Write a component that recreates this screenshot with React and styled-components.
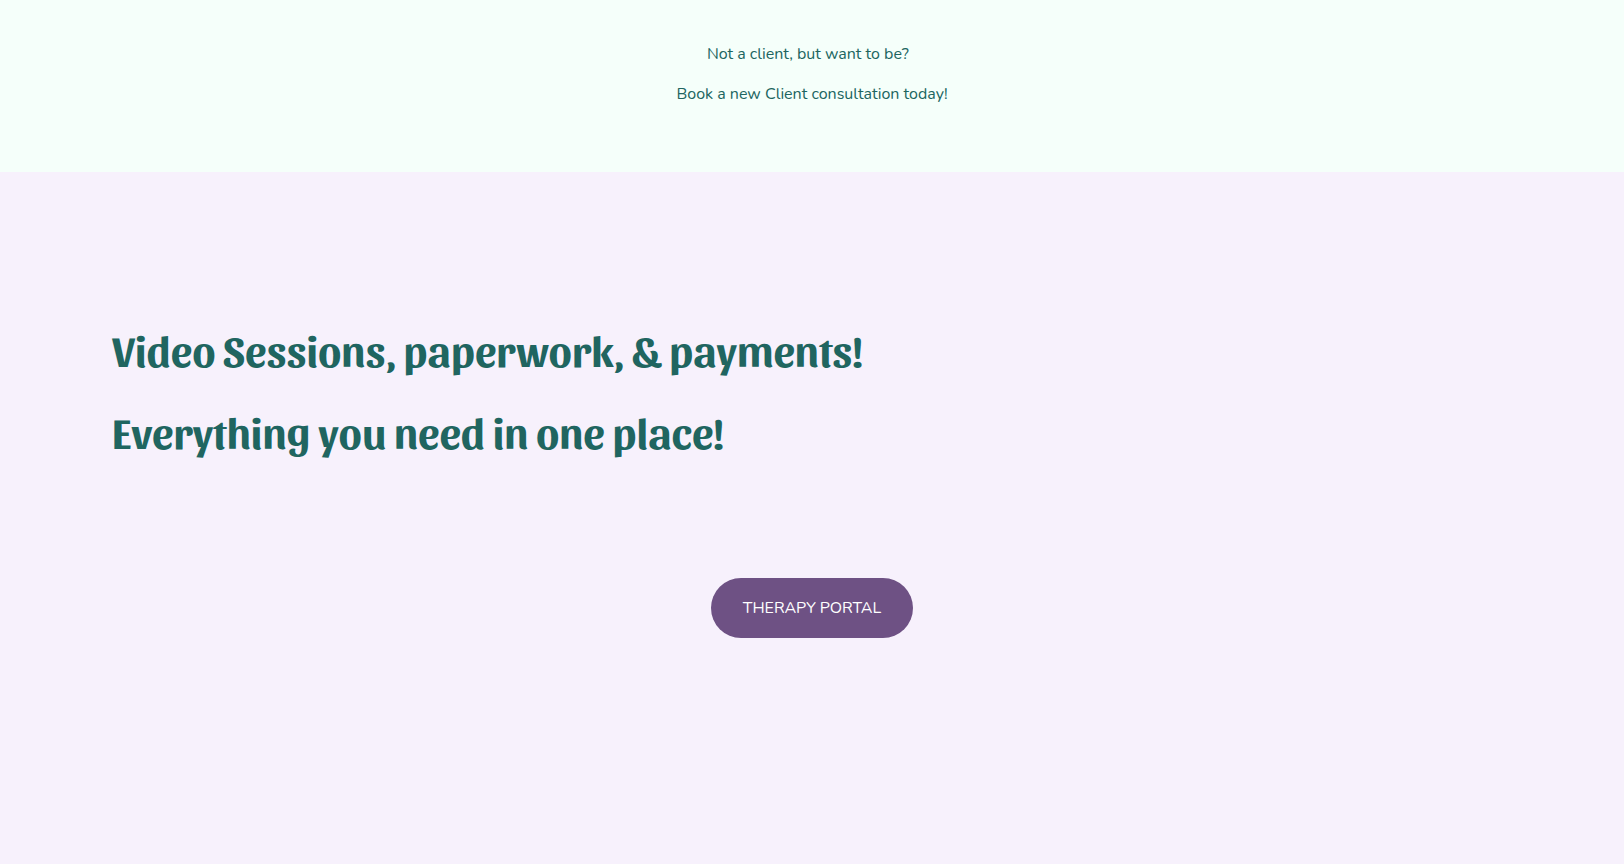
import React from "react";
import styled, { createGlobalStyle } from "styled-components";

const App = () => {
  return (
    <>
      <GlobalStyle />
      <main>
        <Consultation>
          <Text>Not a client, but want to be?&nbsp;&nbsp;</Text>
          <Text>Book a new Client consultation today!</Text>
        </Consultation>
        <Portal>
          <Headings>
            <Title>Video Sessions, paperwork, &amp; payments!</Title>
            <Title>Everything you need in one place!</Title>
          </Headings>
          <Button href="#portal">THERAPY PORTAL</Button>
        </Portal>
      </main>
    </>
  );
};

const GlobalStyle = createGlobalStyle`
  * {
    box-sizing: border-box;
  }

  body {
    margin: 0;
    background-color: #f7f1fc;
    color: #206560;
    font-family: Nunito, Lato, sans-serif;
    font-size: 16px;
    line-height: 24px;
  }
`;

const Consultation = styled.section`
  display: flex;
  flex-direction: column;
  align-items: center;
  gap: 16px;
  padding: 42px 24px 66px;
  background-color: #f5fffa;
`;

const Text = styled.p`
  margin: 0;
  text-align: center;
`;

const Portal = styled.section`
  display: flex;
  flex-direction: column;
  align-items: center;
  gap: 118px;
  padding: 148px 112px;
`;

const Headings = styled.div`
  display: flex;
  flex-direction: column;
  align-self: stretch;
  gap: 24px;
`;

const Title = styled.h2`
  margin: 0;
  font-family: Sansita, Lato, sans-serif;
  font-size: 43px;
  font-weight: 700;
  line-height: 58px;
`;

const Button = styled.a`
  padding: 18px 32px;
  border-radius: 30px;
  background-color: #6e5184;
  color: #fff;
  text-decoration: none;
`;

export default App;
